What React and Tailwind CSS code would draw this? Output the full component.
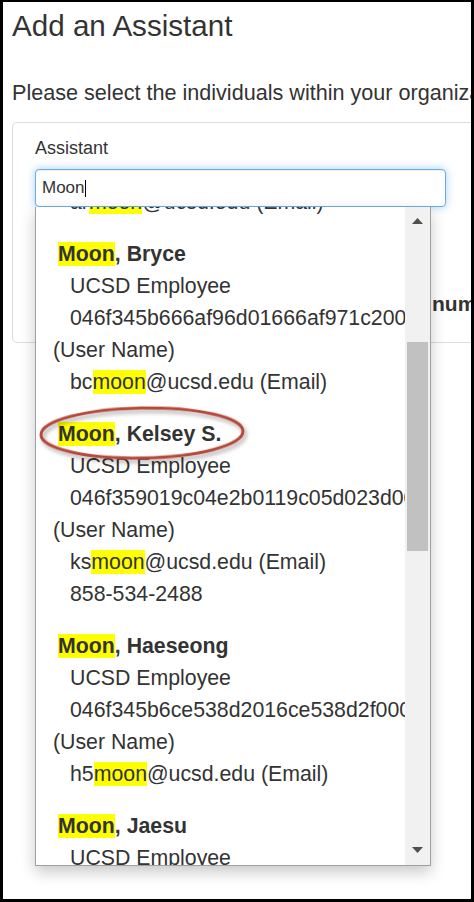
import React from "react";

function Hl({ children }) {
  return <span className="bg-[#ffff00]">{children}</span>;
}

function Item({ name, hex, emailPrefix, phone }) {
  return (
    <div className="py-[10px]">
      <div className="pl-[5px] font-bold whitespace-nowrap">
        <Hl>Moon</Hl>, {name}
      </div>
      <div className="pl-[17px] whitespace-nowrap">UCSD Employee</div>
      <div className="pl-[17px] whitespace-nowrap">{hex}</div>
      <div className="whitespace-nowrap">(User Name)</div>
      <div className="pl-[17px] whitespace-nowrap">
        {emailPrefix}
        <Hl>moon</Hl>@ucsd.edu (Email)
      </div>
      {phone && <div className="pl-[17px] whitespace-nowrap">{phone}</div>}
    </div>
  );
}

export default function App() {
  return (
    <div className="w-[474px] h-[902px] border-t-2 border-x-[3px] border-b-[3px] border-black bg-white overflow-hidden relative font-['Liberation_Sans',Arial,sans-serif] text-[#333]">
      <div className="pl-[9px]">
        <h1 className="mt-[8px] text-[29.6px] leading-[32px] whitespace-nowrap">Add an Assistant</h1>
        <p className="mt-[36px] text-[21.6px] leading-[30px] whitespace-nowrap">
          Please select the individuals within your organization who may act on your behalf.
        </p>
        <div className="mt-[14px] w-[520px] border border-[#dcdcdc] rounded-[5px] pt-[12px] pb-[23px] pl-[22px]">
          <div className="text-[18px] leading-[26px]">Assistant</div>
          <div className="relative mt-[8px] w-[411px]">
            <div className="h-[38px] border border-[#66afe9] rounded-[4px] bg-white flex items-center px-[6px] text-[17px] text-[#333] shadow-[inset_0_1px_1px_rgba(0,0,0,0.075),0_0_8px_rgba(102,175,233,0.6)]">
              <span>Moon</span>
              <span className="inline-block w-px h-[17px] bg-black"></span>
            </div>
            <div className="absolute left-0 top-full z-10 w-[396px] h-[659px] border border-t-0 border-[#a0a0a0] bg-white flex shadow-[0_6px_14px_rgba(0,0,0,0.22)] text-[21.3px] leading-[32px] text-[#333]">
              <div className="flex-1 overflow-hidden pl-[17px]">
                <div className="mt-[-21px] pb-[10px] pl-[17px] whitespace-nowrap">
                  ar<Hl>moon</Hl>@ucsd.edu (Email)
                </div>
                <Item name="Bryce" hex="046f345b666af96d01666af971c2001a" emailPrefix="bc" />
                <Item
                  name="Kelsey S."
                  hex="046f359019c04e2b0119c05d023d0012"
                  emailPrefix="ks"
                  phone="858-534-2488"
                />
                <Item name="Haeseong" hex="046f345b6ce538d2016ce538d2f0001c" emailPrefix="h5" />
                <Item name="Jaesu" hex="046f345b6ce538d2016ce538d2f0001c" emailPrefix="jm" />
              </div>
              <div className="w-[25px] h-full bg-[#f1f1f1] flex flex-col items-center">
                <div className="h-[28px] flex items-center justify-center">
                  <svg width="11" height="6" viewBox="0 0 11 6">
                    <polygon points="0,6 11,6 5.5,0" fill="#505050" />
                  </svg>
                </div>
                <div className="mt-[107px] w-[21px] h-[209px] bg-[#c1c1c1]"></div>
                <div className="flex-1"></div>
                <div className="h-[31px] flex items-center justify-center">
                  <svg width="11" height="6" viewBox="0 0 11 6">
                    <polygon points="0,0 11,0 5.5,6" fill="#505050" />
                  </svg>
                </div>
              </div>
            </div>
          </div>
          <div className="mt-[82px] ml-[327px] text-[21px] leading-[30px] font-bold whitespace-nowrap">
            Phone number
          </div>
        </div>
      </div>
      <svg className="absolute left-0 top-0 pointer-events-none z-20" width="474" height="902">
        <defs>
          <filter id="sh" x="-20%" y="-50%" width="140%" height="200%">
            <feDropShadow dx="2" dy="3" stdDeviation="2" floodColor="#000" floodOpacity="0.35" />
          </filter>
        </defs>
        <ellipse
          cx="139"
          cy="431"
          rx="101"
          ry="25"
          fill="none"
          stroke="#b5493b"
          strokeWidth="3"
          filter="url(#sh)"
          transform="rotate(-1 139 431)"
        />
      </svg>
    </div>
  );
}
